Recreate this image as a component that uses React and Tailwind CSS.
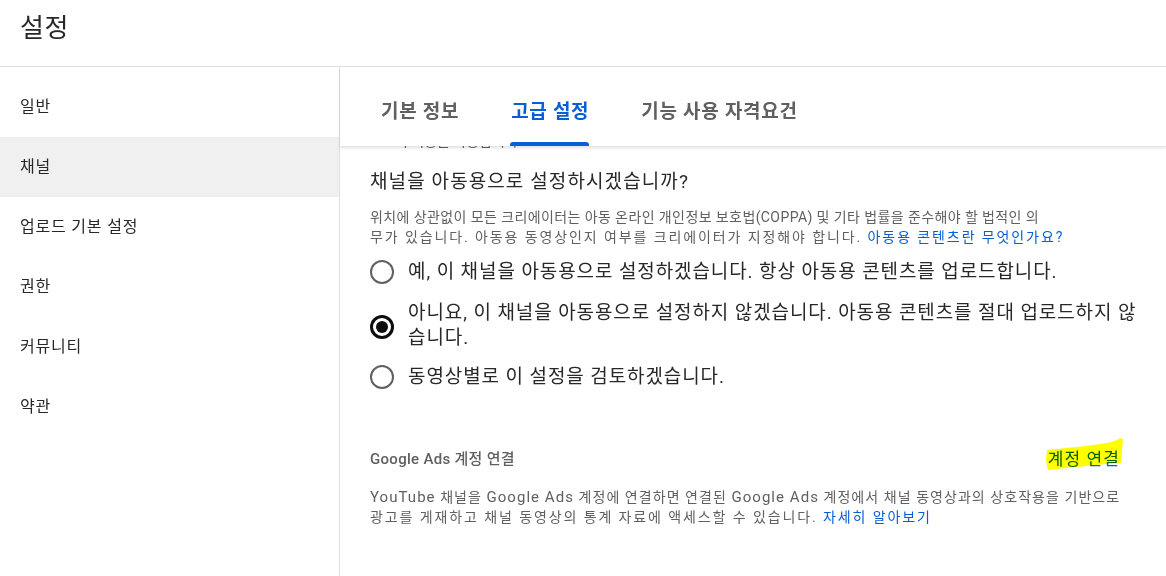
import React from "react";

const FONT = { fontFamily: "Roboto, 'Noto Sans CJK KR', sans-serif" };

function Radio({ checked }) {
  if (checked) {
    return (
      <span className="mt-[3px] flex h-[24px] w-[24px] shrink-0 items-center justify-center rounded-full border-[3px] border-[#0d0d0d]">
        <span className="h-[12px] w-[12px] rounded-full bg-[#0d0d0d]" />
      </span>
    );
  }
  return <span className="h-[24px] w-[24px] shrink-0 rounded-full border-2 border-[#606060]" />;
}

export default function App() {
  const nav = ["일반", "채널", "업로드 기본 설정", "권한", "커뮤니티", "약관"];
  return (
    <div className="flex h-[576px] w-[1166px] flex-col overflow-hidden bg-white text-[#282828]" style={FONT}>
      <header className="flex h-[67px] shrink-0 items-center border-b border-[#e0e0e0] px-[20px] pb-[11px]">
        <h1 className="text-[26px] font-normal leading-none tracking-[0.5px] text-[#282828]">설정</h1>
      </header>
      <div className="flex min-h-0 flex-1">
        <aside className="w-[340px] shrink-0 border-r border-[#e0e0e0] pt-[10px]">
          {nav.map((n) => (
            <div
              key={n}
              className={
                "flex h-[60px] items-center px-[20px] text-[16px] tracking-[0.8px] text-[#282828] " +
                (n === "채널" ? "bg-[#f0f0f0]" : "")
              }
            >
              {n}
            </div>
          ))}
        </aside>
        <main className="flex min-w-0 flex-1 flex-col">
          <div className="relative z-10 flex h-[79px] shrink-0 gap-[52px] bg-white pl-[41px] shadow-[0_2px_3px_rgba(0,0,0,0.12)]">
            {["기본 정보", "고급 설정", "기능 사용 자격요건"].map((t, i) => (
              <div key={t} className="relative pt-[33px]">
                <span
                  className={
                    "block text-[19px] font-bold leading-[24px] tracking-[0.7px] " +
                    (i === 1 ? "text-[#065fd4]" : "text-[#606060]")
                  }
                >
                  {t}
                </span>
                {i === 1 && (
                  <span className="absolute bottom-0 left-[-1px] right-0 h-[4px] rounded-t-[3px] bg-[#065fd4]" />
                )}
              </div>
            ))}
          </div>
          <div className="min-h-0 flex-1 overflow-hidden pl-[30px] pr-[20px]">
            <p className="-mt-[15px] pl-[25px] text-[14px] leading-[20px] text-[#606060]">
              이 기능을 사용합니다.
            </p>
            <h2 className="mt-[19px] text-[19px] font-normal leading-[24px] tracking-[1.1px] text-[#282828]">
              채널을 아동용으로 설정하시겠습니까?
            </h2>
            <p className="mt-[13px] text-[14px] leading-[20px] text-[#606060]">
              <span className="tracking-[0.4px]">
                위치에 상관없이 모든 크리에이터는 아동 온라인 개인정보 보호법(COPPA) 및 기타 법률을 준수해야 할 법적인 의
              </span>
              <br />
              <span className="tracking-[1.9px]">
                무가 있습니다. 아동용 동영상인지 여부를 크리에이터가 지정해야 합니다.{" "}
                <span className="text-[#065fd4]">아동용 콘텐츠란 무엇인가요?</span>
              </span>
            </p>
            <div className="mt-[12px] flex flex-col text-[19px] leading-[25px] tracking-[0.9px] text-[#282828]">
              <label className="flex items-center gap-[14px]">
                <Radio />
                <span>예, 이 채널을 아동용으로 설정하겠습니다. 항상 아동용 콘텐츠를 업로드합니다.</span>
              </label>
              <label className="mt-[16px] flex items-center gap-[14px]">
                <Radio checked />
                <span>
                  아니요, 이 채널을 아동용으로 설정하지 않겠습니다. 아동용 콘텐츠를 절대 업로드하지 않
                  <br />
                  습니다.
                </span>
              </label>
              <label className="mt-[14px] flex items-center gap-[14px]">
                <Radio />
                <span>동영상별로 이 설정을 검토하겠습니다.</span>
              </label>
            </div>
            <div className="mt-[59px] flex items-center justify-between">
              <span className="text-[15px] font-medium leading-[20px] tracking-[0.3px] text-[#606060]">
                Google Ads 계정 연결
              </span>
              <span className="relative mr-[26px] text-[17px] leading-[22px] tracking-[1.1px] text-[#065fd4]">
                계정 연결
                <svg
                  className="pointer-events-none absolute left-[-2px] top-[-10px] mix-blend-multiply"
                  width="78"
                  height="34"
                  viewBox="0 0 78 34"
                >
                  <polygon
                    points="1,12 20,10 40,8 55,6 66,4 71,2 74,0 77,1 76,12 75,25 60,26 40,28 20,30 2,32 0,22"
                    fill="#ffff00"
                  />
                </svg>
              </span>
            </div>
            <p className="mt-[17px] text-[14px] leading-[20px] text-[#606060]">
              <span className="tracking-[1.05px]">
                <span className="text-[15px]">YouTube</span> 채널을 <span className="text-[15px]">Google Ads</span>{" "}
                계정에 연결하면 연결된 <span className="text-[15px]">Google Ads</span> 계정에서 채널 동영상과의
                상호작용을 기반으로
              </span>
              <br />
              <span className="tracking-[1.9px]">
                광고를 게재하고 채널 동영상의 통계 자료에 액세스할 수 있습니다.{" "}
                <span className="text-[#065fd4]">자세히 알아보기</span>
              </span>
            </p>
          </div>
        </main>
      </div>
    </div>
  );
}
